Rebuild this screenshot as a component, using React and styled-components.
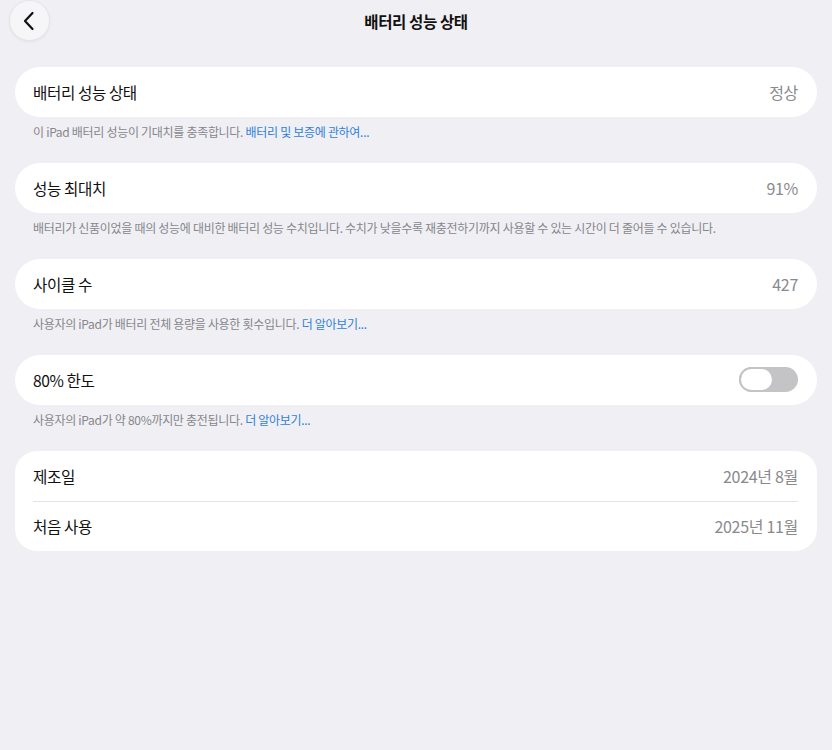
import React, { useState } from 'react'
import styled, { createGlobalStyle } from 'styled-components'

const GlobalStyle = createGlobalStyle`
  html, body {
    margin: 0;
    background: #f0f0f4;
  }
  body {
    font-family: "Noto Sans CJK KR", "Noto Sans", sans-serif;
    -webkit-font-smoothing: antialiased;
  }
`

function App() {
  const [limit, setLimit] = useState(false)

  return (
    <Page>
      <GlobalStyle />
      <Header>
        <BackButton aria-label="뒤로">
          <svg width="14" height="20" viewBox="0 0 14 20" fill="none">
            <path d="M10.5 2 L3 10 L10.5 18" stroke="#111" strokeWidth="2.2" strokeLinecap="round" strokeLinejoin="round" />
          </svg>
        </BackButton>
        <Title>배터리 성능 상태</Title>
      </Header>

      <Sections>
        <Section>
          <Card>
            <Row>
              <Label>배터리 성능 상태</Label>
              <Value>정상</Value>
            </Row>
          </Card>
          <Note>
            이 iPad 배터리 성능이 기대치를 충족합니다. <NoteLink>배터리 및 보증에 관하여...</NoteLink>
          </Note>
        </Section>

        <Section>
          <Card>
            <Row>
              <Label>성능 최대치</Label>
              <Value>91%</Value>
            </Row>
          </Card>
          <Note>
            배터리가 신품이었을 때의 성능에 대비한 배터리 성능 수치입니다. 수치가 낮을수록 재충전하기까지 사용할 수 있는 시간이 더 줄어들 수 있습니다.
          </Note>
        </Section>

        <Section>
          <Card>
            <Row>
              <Label>사이클 수</Label>
              <Value>427</Value>
            </Row>
          </Card>
          <Note>
            사용자의 iPad가 배터리 전체 용량을 사용한 횟수입니다. <NoteLink>더 알아보기...</NoteLink>
          </Note>
        </Section>

        <Section>
          <Card>
            <Row>
              <Label>80% 한도</Label>
              <Switch $on={limit} onClick={() => setLimit(!limit)} aria-pressed={limit}>
                <Thumb $on={limit} />
              </Switch>
            </Row>
          </Card>
          <Note>
            사용자의 iPad가 약 80%까지만 충전됩니다. <NoteLink>더 알아보기...</NoteLink>
          </Note>
        </Section>

        <Section>
          <Card $group>
            <Row>
              <Label>제조일</Label>
              <Value>2024년 8월</Value>
            </Row>
            <Divider />
            <Row>
              <Label>처음 사용</Label>
              <Value>2025년 11월</Value>
            </Row>
          </Card>
        </Section>
      </Sections>
    </Page>
  )
}

///////////////////////////////////////////////////////////////////////////////////

const Page = styled.div`
  width: 832px;
  min-height: 750px;
  background: #f0f0f4;
`

const Header = styled.header`
  position: relative;
  height: 41px;
  display: flex;
  align-items: center;
  justify-content: center;
`

const BackButton = styled.button`
  position: absolute;
  left: 9px;
  top: 0;
  width: 41px;
  height: 41px;
  border-radius: 50%;
  border: 1px solid #e6e6ea;
  background: #f6f6f9;
  box-shadow: 0 1px 3px rgba(0, 0, 0, 0.06);
  display: flex;
  align-items: center;
  justify-content: center;
  padding: 0 2px 0 0;
  cursor: pointer;
`

const Title = styled.h1`
  margin: 0;
  font-size: 15.5px;
  font-weight: 600;
  color: #111;
  letter-spacing: -0.4px;
`

const Sections = styled.main`
  padding: 26px 15px 0;
  display: flex;
  flex-direction: column;
  gap: 24.5px;
`

const Section = styled.section`
  display: flex;
  flex-direction: column;
`

const Card = styled.div`
  background: #fff;
  border-radius: ${p => (p.$group ? '22px' : '25px')};
  padding: 0 19px 0 18px;
`

const Row = styled.div`
  height: 49.5px;
  display: flex;
  align-items: center;
  justify-content: space-between;
`

const Label = styled.span`
  font-size: 15.6px;
  color: #111;
  letter-spacing: -0.4px;
`

const Value = styled.span`
  font-size: 16px;
  color: #8a8a8e;
  letter-spacing: -0.3px;
`

const Divider = styled.div`
  height: 1px;
  background: #e4e4e8;
`

const Note = styled.p`
  margin: 0;
  padding: 7px 18px 0;
  font-size: 12px;
  line-height: 15px;
  color: #86868b;
  letter-spacing: -0.3px;
`

const NoteLink = styled.span`
  color: #2f7fd9;
`

const Switch = styled.button`
  width: 59px;
  height: 25px;
  border-radius: 13px;
  border: none;
  padding: 0;
  background: ${p => (p.$on ? '#34c759' : '#c4c4c7')};
  display: flex;
  justify-content: ${p => (p.$on ? 'flex-end' : 'flex-start')};
  cursor: pointer;
`

const Thumb = styled.span`
  width: 35px;
  height: 25px;
  box-sizing: border-box;
  border-radius: 13px;
  background: #fff;
  border: 2px solid #c4c4c7;
`

export default App
